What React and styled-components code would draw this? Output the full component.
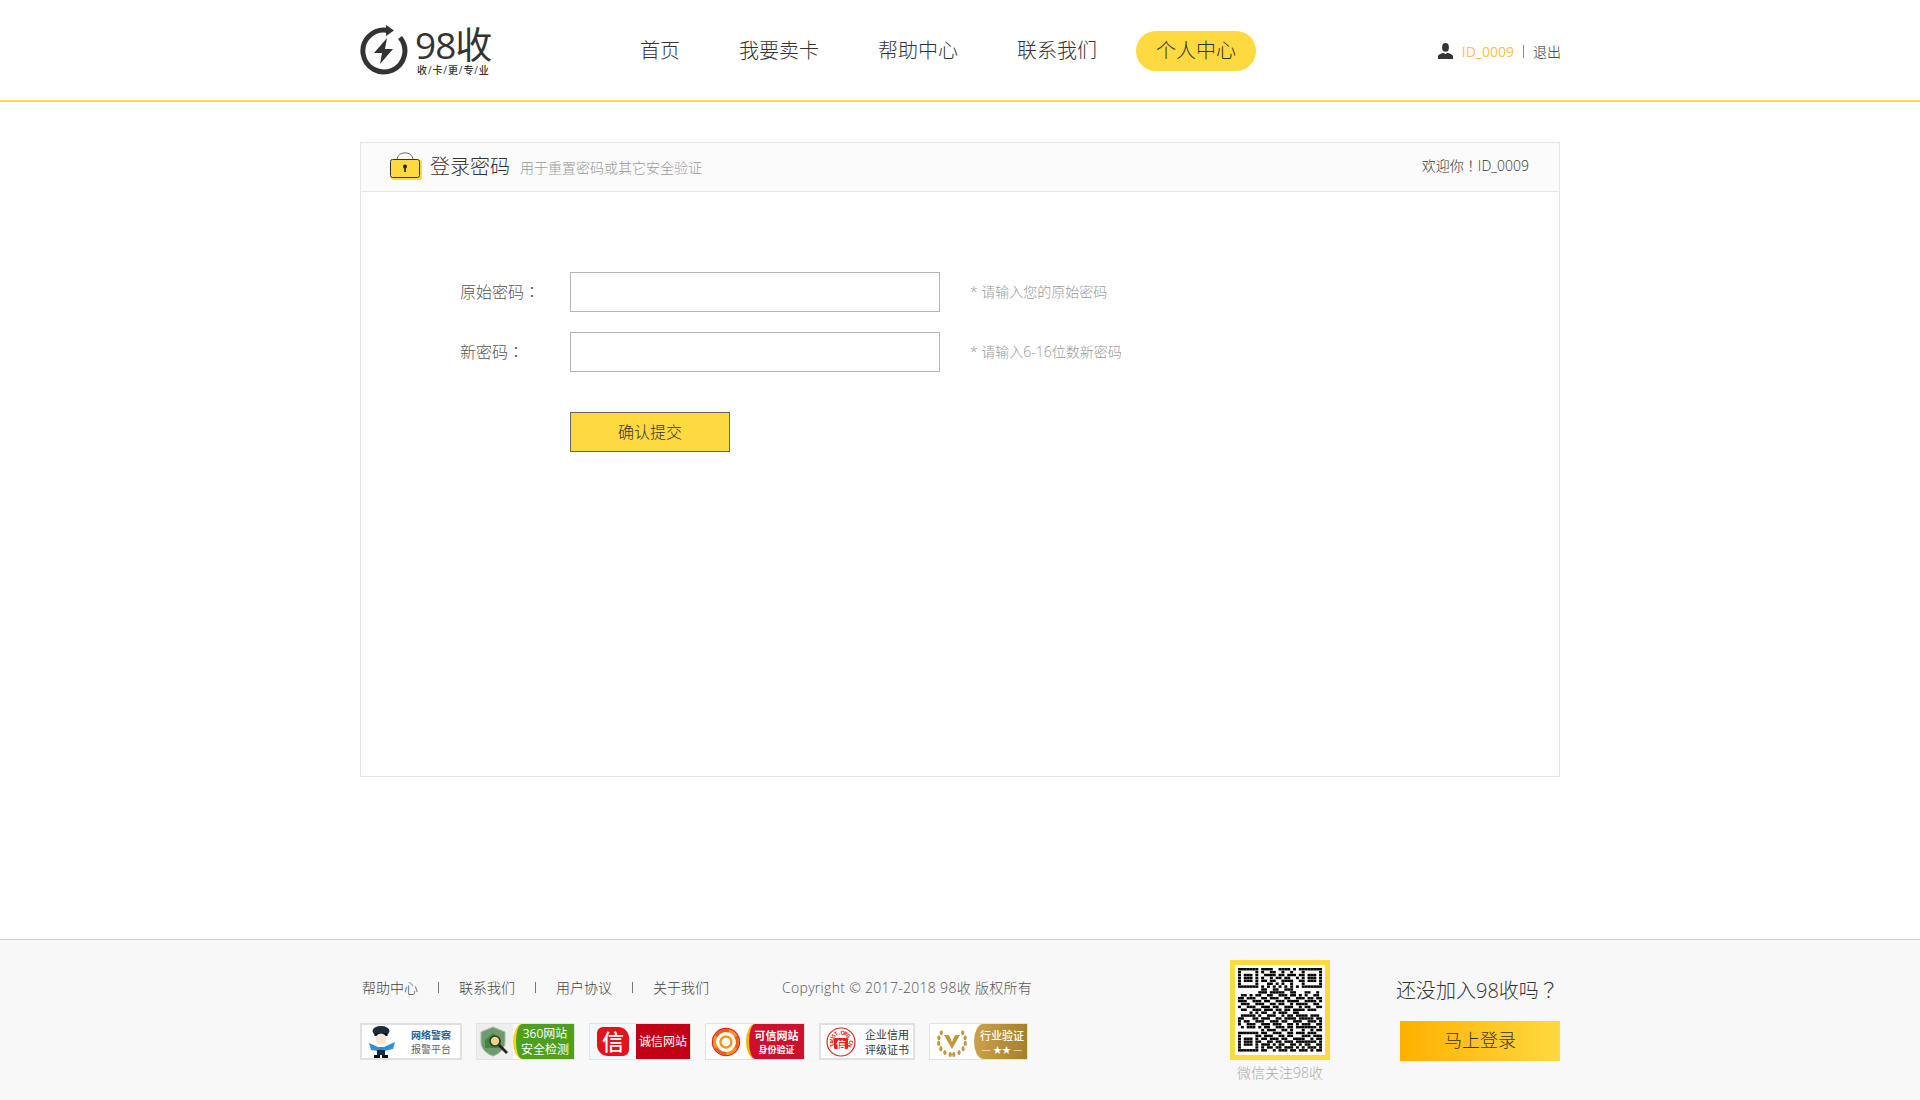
import React from 'react';
import styled, { createGlobalStyle } from 'styled-components';

const GlobalStyle = createGlobalStyle`
  * {
    box-sizing: border-box;
  }
  html,
  body {
    margin: 0;
    padding: 0;
    background: #fff;
    color: #333;
    font-family: 'Open Sans', 'Noto Sans CJK SC', sans-serif;
    font-weight: 300;
  }
`;

const Page = styled.div`
  width: 1920px;
  height: 1100px;
  display: flex;
  flex-direction: column;
  overflow: hidden;
`;

const Wrap = styled.div`
  width: 1200px;
  margin: 0 auto;
`;

const Wide = styled.span`
  font-family: 'Noto Sans CJK TC', sans-serif;
`;

const Header = styled.header`
  height: 102px;
  border-bottom: 2px solid #ffd940;
  flex: none;
`;

const HeaderInner = styled(Wrap)`
  height: 100px;
  padding-top: 2px;
  display: flex;
  align-items: center;
`;

const Logo = styled.a`
  width: 132px;
  height: 52px;
  display: flex;
  gap: 7px;
  color: #333;
`;

const LogoText = styled.div`
  display: flex;
  flex-direction: column;
`;

const LogoName = styled.span`
  font-size: 37px;
  line-height: 36px;
  font-weight: 400;
  letter-spacing: -1px;
  margin-top: 2px;
  white-space: nowrap;
`;

const LogoSlogan = styled.span`
  font-size: 10px;
  line-height: 12px;
  font-weight: 500;
  margin: 1px 0 0 2px;
  letter-spacing: 0.9px;
  white-space: nowrap;
`;

const Nav = styled.nav`
  display: flex;
  align-items: center;
  gap: 19px;
  margin-left: 128px;
`;

const NavItem = styled.a`
  height: 40px;
  padding: 0 20px;
  border-radius: 20px;
  font-size: 20px;
  line-height: 40px;
  color: #333;
  background: ${(p) => (p.$active ? '#ffd940' : 'transparent')};
`;

const UserBox = styled.div`
  margin-left: auto;
  display: flex;
  align-items: center;
  font-size: 14px;
  transform: translateX(1px);
`;

const UserName = styled.span`
  color: #ffbe4d;
  margin-left: 9px;
  font-weight: 400;
`;

const UserSep = styled.span`
  width: 1px;
  height: 13px;
  background: #888;
  margin: 0 9px;
`;

const Main = styled(Wrap)`
  margin-top: 40px;
  height: 635px;
  border: 1px solid #e5e5e5;
  flex: none;
`;

const PanelHead = styled.div`
  height: 49px;
  padding: 0 30px 3px 28px;
  background: #fbfbfb;
  border-bottom: 1px solid #e5e5e5;
  display: flex;
  align-items: center;
`;

const PanelTitle = styled.h2`
  margin: 0 0 0 7px;
  font-size: 20px;
  font-weight: 300;
  color: #333;
`;

const PanelSub = styled.span`
  margin-left: 10px;
  font-size: 14px;
  color: #999;
  margin-top: 3px;
`;

const Welcome = styled.span`
  margin-left: auto;
  font-size: 14px;
  color: #333;
  margin-top: -2px;
`;

const Form = styled.form`
  padding: 80px 0 0 99px;
  display: flex;
  flex-direction: column;
  gap: 20px;
`;

const Field = styled.div`
  display: flex;
  align-items: center;
`;

const Label = styled.label`
  width: 110px;
  font-size: 16px;
  color: #555;
  padding-bottom: 2px;
`;

const Input = styled.input`
  width: 370px;
  height: 40px;
  border: 1px solid #b5b5b5;
  background: #fff;
  outline: none;
`;

const Hint = styled.span`
  margin-left: 30px;
  font-size: 14px;
  color: #999;
  padding-bottom: 2px;
`;

const Submit = styled.button`
  width: 160px;
  height: 40px;
  margin: 20px 0 0 110px;
  padding: 0 0 2px;
  border: 1px solid #666;
  background: #ffd940;
  color: #333;
  font-family: inherit;
  font-weight: 300;
  font-size: 16px;
`;

const Footer = styled.footer`
  margin-top: 162px;
  flex: 1;
  background: #f8f8f8;
  border-top: 1px solid #ccc;
`;

const FooterInner = styled(Wrap)`
  display: flex;
`;

const FooterLeft = styled.div`
  width: 870px;
  padding-top: 37px;
`;

const LinkRow = styled.div`
  height: 20px;
  display: flex;
  align-items: center;
  padding-left: 2px;
  font-size: 14px;
  color: #444;
`;

const FootSep = styled.span`
  width: 1px;
  height: 11px;
  background: #777;
  margin: 0 20px;
`;

const Copyright = styled.span`
  margin-left: 73px;
  color: #555;
  letter-spacing: 0.3px;
`;

const BadgeRow = styled.div`
  display: flex;
  gap: 14px;
  margin-top: 26px;
`;

const Badge = styled.div`
  width: ${(p) => p.$w}px;
  height: 37px;
  display: flex;
  background: #fff;
  border: ${(p) => (p.$thin ? '1px solid #e2e2e2' : '2px solid #e0e0e0')};
`;

const BadgeIcon = styled.div`
  flex: none;
  width: ${(p) => p.$w}px;
  display: flex;
  align-items: center;
  justify-content: center;
  background: ${(p) => p.$bg || 'transparent'};
`;

const BadgePanel = styled.div`
  flex: 1;
  display: flex;
  flex-direction: column;
  align-items: center;
  justify-content: center;
  color: ${(p) => p.$color || '#fff'};
  background: ${(p) => p.$bg || 'transparent'};
  font-weight: 400;
  ${(p) =>
    p.$arc &&
    `border-left: 3px solid ${p.$arc};
    border-top-left-radius: 9px 50%;
    border-bottom-left-radius: 9px 50%;`}
`;

const BadgeLine = styled.span`
  font-size: ${(p) => p.$size || 11}px;
  line-height: ${(p) => (p.$size || 11) + 4}px;
  font-weight: ${(p) => p.$weight || 400};
  color: ${(p) => p.$color || 'inherit'};
  white-space: nowrap;
`;

const SealMark = styled.span`
  width: 32px;
  height: 29px;
  border-radius: 6px 11px 6px 11px;
  background: #e3131b;
  color: #fff;
  font-size: 22px;
  line-height: 28px;
  font-weight: 500;
  text-align: center;
`;

const QrCol = styled.div`
  width: 100px;
  padding-top: 20px;
  display: flex;
  flex-direction: column;
  align-items: center;
`;

const QrFrame = styled.div`
  width: 100px;
  height: 100px;
  border: 5px solid #ffd940;
  background: #fff;
  display: flex;
  align-items: center;
  justify-content: center;
`;

const QrCaption = styled.span`
  margin-top: 2px;
  font-size: 14px;
  color: #aaa;
  white-space: nowrap;
`;

const JoinCol = styled.div`
  width: 160px;
  margin-left: 70px;
  padding-top: 35px;
`;

const JoinTitle = styled.div`
  margin-left: -4px;
  font-size: 20px;
  line-height: 30px;
  color: #333;
  white-space: nowrap;
`;

const LoginBtn = styled.a`
  display: block;
  height: 40px;
  margin-top: 15px;
  background: linear-gradient(90deg, #ffb000, #ffd940);
  font-size: 18px;
  line-height: 38px;
  text-align: center;
  color: #333;
`;

const QR_ROWS = [
  '11111110111100111101011111111',
  '10000010100110010010001000001',
  '10111010011110110111011011101',
  '10111010100101101100101011101',
  '10111010110110011110011011101',
  '10000010001101010010001000001',
  '11111110101010101010101111111',
  '00000000110011001110000000000',
  '00000001110111110011000110010',
  '01101011001100111011010100110',
  '11011100110111001100111011011',
  '11100111011001110111100111101',
  '01110011100110110010111100110',
  '10011100111011001110010110011',
  '01100111011101101101111011100',
  '00001010110010111001100000000',
  '01111101001110010110111101110',
  '11000110111001101111011111011',
  '10110011100111011001110011101',
  '10011100111011100110101110011',
  '01011101011001110110111111101',
  '00000000101110011010001001011',
  '11111110110011100110111011100',
  '10000011011100110110001110111',
  '10111010110111011001111001011',
  '10111011001101101110111111101',
  '10111010111010110011010110011',
  '10000010101101101110101011101',
  '11111110110010111011011101011',
];

function QrCode() {
  return (
    <svg width="84" height="84" viewBox="0 0 29 29">
      {QR_ROWS.map((row, y) =>
        row.split('').map((cell, x) =>
          cell === '1' ? (
            <rect key={`${x}-${y}`} x={x} y={y} width="1.02" height="0.85" fill="#000" />
          ) : null
        )
      )}
    </svg>
  );
}

function LogoMark() {
  return (
    <svg width="48" height="52" viewBox="0 0 48 52" style={{ flex: 'none' }}>
      <path d="M40 12.5A21 21 0 1 1 27 5.2" fill="none" stroke="#333" strokeWidth="5" />
      <polygon points="26,0 34,5.5 26,11" fill="#333" />
      <polygon points="27,13 14,28 22,28 20,39 33,24 25,24" fill="#333" />
    </svg>
  );
}

function LockIcon() {
  return (
    <svg width="34" height="30" viewBox="0 0 34 30" style={{ flex: 'none' }}>
      <path d="M8 9C8 -0.5 24 -0.5 24 9" fill="none" stroke="#666" strokeWidth="1" />
      <rect x="2" y="9" width="31" height="20" rx="2" fill="#ffd940" />
      <rect x="1.5" y="8.5" width="29" height="18" rx="2" fill="none" stroke="#333" strokeWidth="1" />
      <circle cx="16" cy="15.5" r="2" fill="#222" />
      <rect x="15.2" y="16" width="1.6" height="5" fill="#222" />
    </svg>
  );
}

function UserIcon() {
  return (
    <svg width="15" height="16" viewBox="0 0 15 16">
      <ellipse cx="7.5" cy="4.4" rx="3.4" ry="4.4" fill="#333" />
      <path d="M0 16V13.5C0 11.5 3 11 5 9.8L7.5 11L10 9.8C12 11 15 11.5 15 13.5V16Z" fill="#333" />
    </svg>
  );
}

function PoliceIcon() {
  return (
    <svg width="26" height="32" viewBox="0 0 26 32">
      <ellipse cx="12" cy="5" rx="8.5" ry="5" fill="#1d2b3a" />
      <rect x="5.5" y="7" width="13" height="3" fill="#111" />
      <circle cx="12" cy="13" r="5.5" fill="#f7e6d6" />
      <path d="M0 17L9 21L15 21L26 16L24 23L15 25L9 25L2 24Z" fill="#2f8fdc" />
      <rect x="8" y="24" width="8" height="5" fill="#1d2b3a" />
      <rect x="5" y="29" width="6" height="3" fill="#111" />
      <rect x="13" y="29" width="6" height="3" fill="#111" />
    </svg>
  );
}

function ShieldIcon() {
  return (
    <svg width="30" height="32" viewBox="0 0 30 32">
      <path d="M13 1L25 6V16C25 23 19 28 13 30C7 28 1 23 1 16V6Z" fill="#6f9a6b" stroke="#a9b8a5" />
      <path d="M13 7L21 14V22H5V14Z" fill="#3c8a3e" />
      <circle cx="15" cy="15" r="5" fill="#f0d684" stroke="#333" strokeWidth="1.6" />
      <path d="M19 19L27 27" stroke="#222" strokeWidth="2.6" />
    </svg>
  );
}

function SwirlIcon() {
  const blades = [0, 60, 120, 180, 240, 300];
  return (
    <svg width="30" height="30" viewBox="0 0 30 30" fill="none">
      <circle cx="15" cy="15" r="13.5" stroke="#e2231a" strokeWidth="1.4" />
      {blades.map((deg) => (
        <path
          key={deg}
          d="M15 3.5A11.5 11.5 0 0 1 26 12"
          stroke={deg % 120 === 0 ? '#f7941d' : '#ee5a1e'}
          strokeWidth="3"
          transform={`rotate(${deg} 15 15)`}
        />
      ))}
      <circle cx="15" cy="15" r="5.5" stroke="#f7941d" strokeWidth="2.4" />
    </svg>
  );
}

const STAMP_LETTERS = 'TRUST.ORG.CN'.split('');

function StampIcon() {
  return (
    <svg width="30" height="30" viewBox="0 0 30 30">
      <circle cx="15" cy="15" r="14" fill="none" stroke="#e2231a" strokeWidth="1.2" />
      {STAMP_LETTERS.map((ch, i) => (
        <text
          key={i}
          x="15"
          y="7.5"
          fontSize="5.5"
          fontWeight="700"
          fill="#e2231a"
          textAnchor="middle"
          transform={`rotate(${-110 + i * 20} 15 15)`}
        >
          {ch}
        </text>
      ))}
      <rect x="8" y="11" width="14" height="11" rx="1" fill="#e2231a" />
      <text x="15" y="20.5" fontSize="9.5" fontWeight="700" fill="#fff" textAnchor="middle">信</text>
    </svg>
  );
}

function LaurelIcon() {
  const leaves = [0, 1, 2, 3, 4, 5];
  return (
    <svg width="32" height="30" viewBox="0 0 32 30">
      {leaves.map((i) => {
        const a = 2.9 - i * 0.42;
        const r = 13.5;
        const y = 14 + r * Math.sin(a + 0.9);
        const dx = r * Math.cos(a + 0.9);
        return (
          <g key={i} fill="#c3973a">
            <ellipse cx={16 + dx} cy={y} rx="1.6" ry="2.6" />
            <ellipse cx={16 - dx} cy={y} rx="1.6" ry="2.6" />
          </g>
        );
      })}
      <polygon points="8,8 13,8 16,15 19,8 24,8 16,22" fill="#c3973a" />
    </svg>
  );
}

export default function App() {
  return (
    <Page>
      <GlobalStyle />
      <Header>
        <HeaderInner>
          <Logo>
            <LogoMark />
            <LogoText>
              <LogoName>98收</LogoName>
              <LogoSlogan>收/卡/更/专/业</LogoSlogan>
            </LogoText>
          </Logo>
          <Nav>
            <NavItem>首页</NavItem>
            <NavItem>我要卖卡</NavItem>
            <NavItem>帮助中心</NavItem>
            <NavItem>联系我们</NavItem>
            <NavItem $active>个人中心</NavItem>
          </Nav>
          <UserBox>
            <UserIcon />
            <UserName>ID_0009</UserName>
            <UserSep />
            <span>退出</span>
          </UserBox>
        </HeaderInner>
      </Header>

      <Main>
        <PanelHead>
          <LockIcon />
          <PanelTitle>登录密码</PanelTitle>
          <PanelSub>用于重置密码或其它安全验证</PanelSub>
          <Welcome>欢迎你<Wide>！</Wide>ID_0009</Welcome>
        </PanelHead>
        <Form>
          <Field>
            <Label>原始密码<Wide>：</Wide></Label>
            <Input type="password" />
            <Hint>* 请输入您的原始密码</Hint>
          </Field>
          <Field>
            <Label>新密码<Wide>：</Wide></Label>
            <Input type="password" />
            <Hint>* 请输入6-16位数新密码</Hint>
          </Field>
          <div>
            <Submit type="button">确认提交</Submit>
          </div>
        </Form>
      </Main>

      <Footer>
        <FooterInner>
          <FooterLeft>
            <LinkRow>
              <span>帮助中心</span>
              <FootSep />
              <span>联系我们</span>
              <FootSep />
              <span>用户协议</span>
              <FootSep />
              <span>关于我们</span>
              <Copyright>Copyright © 2017-2018 98收 版权所有</Copyright>
            </LinkRow>
            <BadgeRow>
              <Badge $w={102}>
                <BadgeIcon $w={40}>
                  <PoliceIcon />
                </BadgeIcon>
                <BadgePanel>
                  <BadgeLine $size={10} $weight={700} $color="#2a5f9e">网络警察</BadgeLine>
                  <BadgeLine $size={10} $color="#666">报警平台</BadgeLine>
                </BadgePanel>
              </Badge>
              <Badge $w={99} $thin>
                <BadgeIcon $w={36} $bg="#eee">
                  <ShieldIcon />
                </BadgeIcon>
                <BadgePanel $bg="#4e9f1d" $arc="#f3d21e">
                  <BadgeLine $size={12}>360网站</BadgeLine>
                  <BadgeLine $size={12}>安全检测</BadgeLine>
                </BadgePanel>
              </Badge>
              <Badge $w={102} $thin>
                <BadgeIcon $w={46} $bg="#f2f8fb">
                  <SealMark>信</SealMark>
                </BadgeIcon>
                <BadgePanel $bg="#c10013">
                  <BadgeLine $size={12}>诚信网站</BadgeLine>
                </BadgePanel>
              </Badge>
              <Badge $w={100} $thin>
                <BadgeIcon $w={40}>
                  <SwirlIcon />
                </BadgeIcon>
                <BadgePanel $bg="#ce102c" $arc="#f5b800">
                  <BadgeLine $size={11} $weight={700}>可信网站</BadgeLine>
                  <BadgeLine $size={9} $weight={700}>身份验证</BadgeLine>
                </BadgePanel>
              </Badge>
              <Badge $w={96}>
                <BadgeIcon $w={40}>
                  <StampIcon />
                </BadgeIcon>
                <BadgePanel $color="#333">
                  <BadgeLine $size={11}>企业信用</BadgeLine>
                  <BadgeLine $size={11}>评级证书</BadgeLine>
                </BadgePanel>
              </Badge>
              <Badge $w={99} $thin>
                <BadgeIcon $w={44}>
                  <LaurelIcon />
                </BadgeIcon>
                <BadgePanel $bg="linear-gradient(90deg, #c9a04a, #a67f2c)" $arc="#c9a04a">
                  <BadgeLine $size={11} $weight={500}>行业验证</BadgeLine>
                  <BadgeLine $size={9}>— ★★ —</BadgeLine>
                </BadgePanel>
              </Badge>
            </BadgeRow>
          </FooterLeft>
          <QrCol>
            <QrFrame>
              <QrCode />
            </QrFrame>
            <QrCaption>微信关注98收</QrCaption>
          </QrCol>
          <JoinCol>
            <JoinTitle>还没加入98收吗<Wide>？</Wide></JoinTitle>
            <LoginBtn>马上登录</LoginBtn>
          </JoinCol>
        </FooterInner>
      </Footer>
    </Page>
  );
}
